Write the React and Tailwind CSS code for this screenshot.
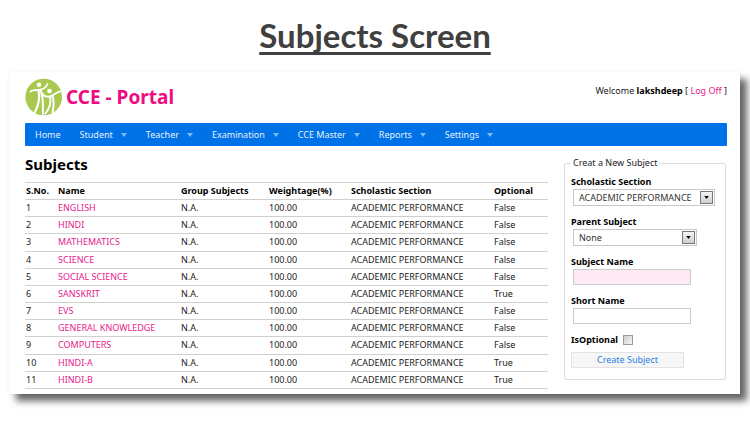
const subjects = [
  ["ENGLISH", "False"],
  ["HINDI", "False"],
  ["MATHEMATICS", "False"],
  ["SCIENCE", "False"],
  ["SOCIAL SCIENCE", "False"],
  ["SANSKRIT", "True"],
  ["EVS", "False"],
  ["GENERAL KNOWLEDGE", "False"],
  ["COMPUTERS", "False"],
  ["HINDI-A", "True"],
  ["HINDI-B", "True"],
];

const menus = ["Student", "Teacher", "Examination", "CCE Master", "Reports", "Settings"];

function Logo() {
  return (
    <svg viewBox="0 0 38 38" className="size-[38px] shrink-0" aria-hidden="true">
      <circle cx="18.700" cy="19" r="18.3" fill="#a8c850" />
      <g fill="none" stroke="#fff" strokeLinecap="round" strokeLinejoin="round">
        <path d="M5.500 13.500 C8 11 11 12.500 14 12 C18 11.500 21 9.500 22.500 6" strokeWidth="1.800" />
        <path d="M13.500 12.500 C15 19 13.500 27 10 34" strokeWidth="2.200" />
        <path d="M15.500 12.500 C19 20 17.500 28 18 36" strokeWidth="2" />
        <path d="M17.500 15.500 C19 19 22 19.500 26 18 C30 16.500 32 14 35 13.500" strokeWidth="1.800" />
        <path d="M25 18.500 C26.500 25 24 31 20.500 35.500" strokeWidth="2" />
        <path d="M27.500 18 C30 25 28 31 27.500 34.500" strokeWidth="2" />
      </g>
      <circle cx="14" cy="6.800" r="2.300" fill="#fff" />
      <circle cx="24.500" cy="13" r="2.300" fill="#fff" />
    </svg>
  );
}

function Caret({ className }) {
  return (
    <svg viewBox="0 0 6 4" className={className} aria-hidden="true">
      <path d="M0 0h6L3 4z" fill="currentColor" />
    </svg>
  );
}

function Dropdown({ id, label, value, className }) {
  return (
    <div className="flex flex-col items-start">
      <label htmlFor={id} className="font-bold text-black">{label}</label>
      <div className={`relative ml-0.5 h-[17px] ${className}`}>
        <select id={id} className="block size-full appearance-none border border-[#c8c8c8] bg-white pl-[5px] leading-[14px] text-[#333]">
          <option>{value}</option>
        </select>
        <span className="pointer-events-none absolute top-[2px] right-[2px] flex h-[13px] w-[13px] items-center justify-center border border-[#777] bg-gradient-to-b from-[#f4f4f4] to-[#cfcfcf] text-black">
          <Caret className="h-[3px] w-[5px]" />
        </span>
      </div>
    </div>
  );
}

function TextField({ id, label, className }) {
  return (
    <div className="flex flex-col items-start">
      <label htmlFor={id} className="font-bold text-black">{label}</label>
      <input id={id} type="text" className={`ml-0.5 h-4 w-[118px] border border-[#ccc] px-1 ${className}`} />
    </div>
  );
}

export default function App() {
  return (
    <div className="overflow-hidden bg-white pb-8 font-['Noto_Sans','Open_Sans',sans-serif] text-[9px] leading-[14px] text-[#222]">
      <h1 className="pt-[15px] pb-[17px] text-center font-[Lato,sans-serif] text-[33px] leading-10 font-bold text-[#404040]">
        <span className="underline decoration-[3px] underline-offset-[4px] [text-decoration-skip-ink:none]">Subjects Screen</span>
      </h1>

      <main className="mr-[10px] ml-[9px] bg-white pt-[6px] pr-[13px] pb-[5px] pl-4 shadow-[7px_7px_7px_rgba(0,0,0,0.6),0_0_4px_rgba(0,0,0,0.04)]">
        <header className="flex items-start justify-between">
          <div className="flex items-center gap-[3px]">
            <Logo />
            <h2 className="text-[19px] leading-9 font-bold text-[#ee0a80]">CCE - Portal</h2>
          </div>
          <p className="pt-[6px]">
            Welcome <b className="text-black">lakshdeep</b> [ <a href="#" className="text-[#e8208c]">Log Off</a> ]
          </p>
        </header>

        <nav className="mt-[7px] flex h-[23px] items-center gap-[19px] rounded-[1px] bg-[#0072e8] px-[10px] text-[#e6f1fd]">
          <a href="#">Home</a>
          {menus.map((m) => (
            <a key={m} href="#" className="flex items-center gap-2">
              {m}
              <Caret className="h-1 w-[6px] text-[#80b9f4]" />
            </a>
          ))}
        </nav>

        <div className="flex items-start justify-between">
          <section>
            <h2 className="pt-[7px] pb-[7px] text-[15px] leading-[22px] font-bold text-black">Subjects</h2>
            <table className="h-[207px] w-[523px] table-fixed border-collapse text-left">
              <colgroup>
                <col className="w-8" />
                <col className="w-[123px]" />
                <col className="w-[88px]" />
                <col className="w-[82px]" />
                <col className="w-[143px]" />
                <col />
              </colgroup>
              <thead>
                <tr className="border-y border-[#d0d0d0] text-black">
                  {["S.No.", "Name", "Group Subjects", "Weightage(%)", "Scholastic Section", "Optional"].map((h) => (
                    <th key={h} className="py-px pl-px whitespace-nowrap">{h}</th>
                  ))}
                </tr>
              </thead>
              <tbody>
                {subjects.map(([name, optional], i) => (
                  <tr key={name} className="border-b border-[#d0d0d0]">
                    <td className="py-px pl-px">{i + 1}</td>
                    <td className="py-px pl-px whitespace-nowrap"><a href="#" className="text-[#e8208c]">{name}</a></td>
                    <td className="py-px pl-px">N.A.</td>
                    <td className="py-px pl-px">100.00</td>
                    <td className="py-px pl-px whitespace-nowrap">ACADEMIC PERFORMANCE</td>
                    <td className="py-px pl-px">{optional}</td>
                  </tr>
                ))}
              </tbody>
            </table>
          </section>

          <form className="pt-[10px] pr-px" onSubmit={(e) => e.preventDefault()}>
            <fieldset className="w-[162px] rounded-[2px] border border-[#ddd] pb-[11px] pl-[6px]">
              <legend className="px-[2px]">Creat a New Subject</legend>
              <div className="flex flex-col gap-[9px] pt-[5px]">
                <Dropdown id="section" label="Scholastic Section" value="ACADEMIC PERFORMANCE" className="w-[142px]" />
                <Dropdown id="parent" label="Parent Subject" value="None" className="w-[124px]" />
                <TextField id="name" label="Subject Name" className="bg-[#fdeaf5]" />
                <TextField id="short" label="Short Name" className="bg-white" />
                <div className="flex items-center gap-[5px]">
                  <label htmlFor="optional" className="font-bold text-black">IsOptional</label>
                  <input id="optional" type="checkbox" className="size-[10px] appearance-none border border-[#999] bg-gradient-to-br from-[#ccc] to-[#f6f6f6]" />
                </div>
              </div>
              <button type="submit" className="mt-[5px] block h-4 w-[113px] rounded-[1px] border border-[#e3e3e3] bg-[#f6f6f6] leading-[14px] text-[#2b7de0]">
                Create Subject
              </button>
            </fieldset>
          </form>
        </div>
      </main>
    </div>
  );
}
